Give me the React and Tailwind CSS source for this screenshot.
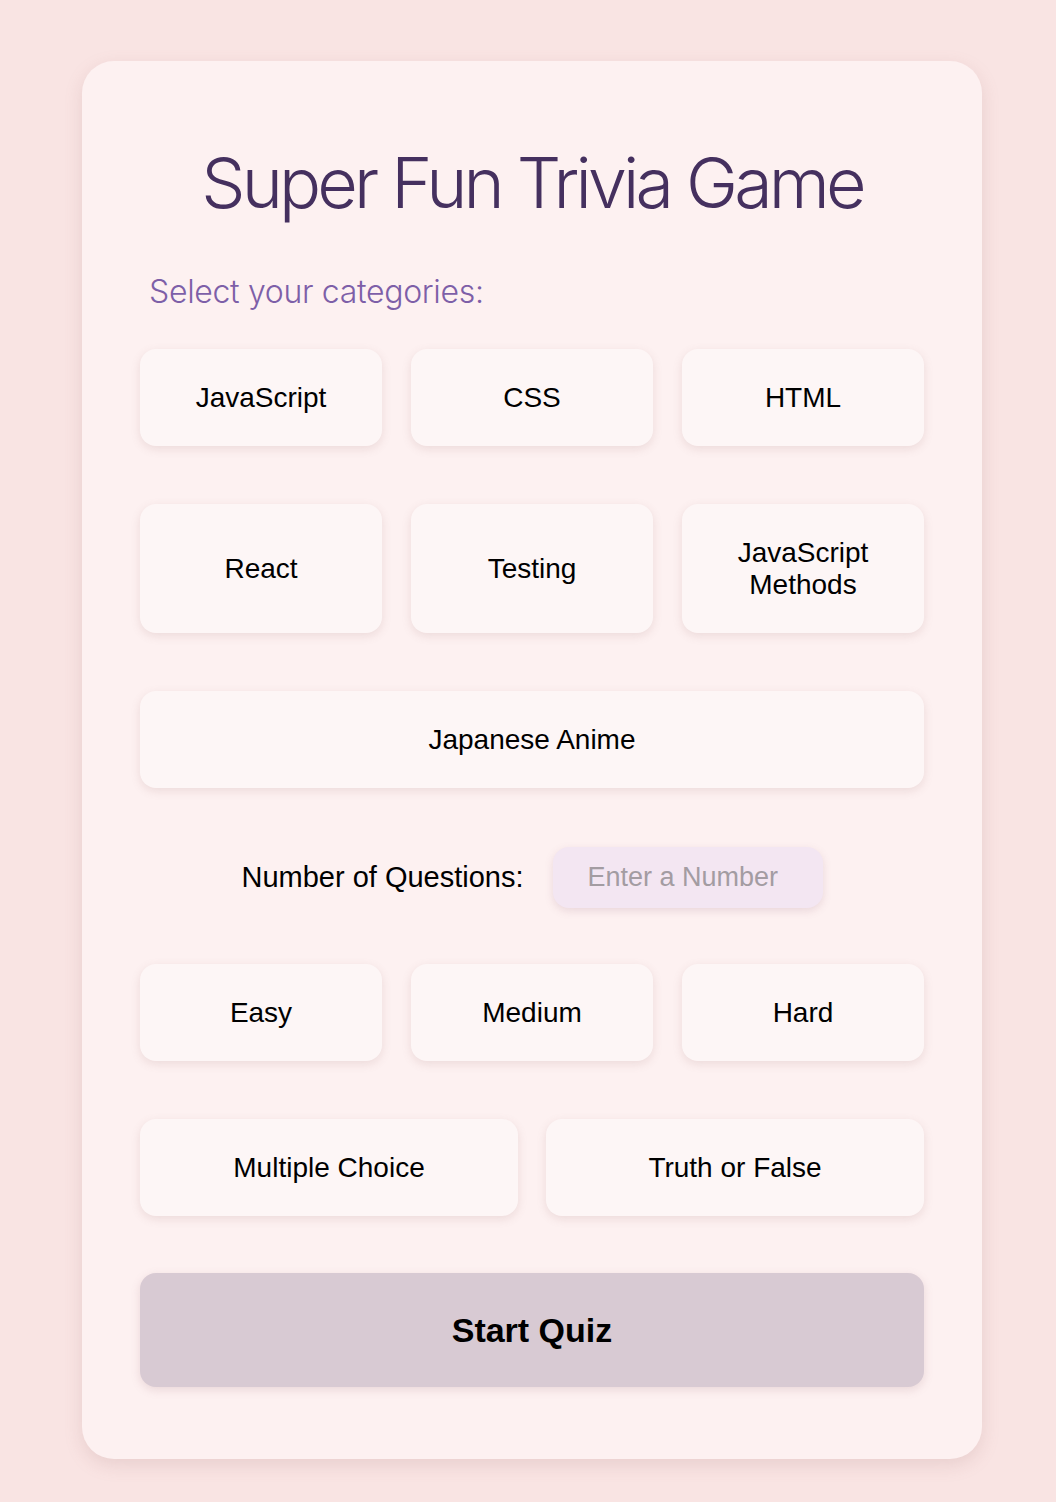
import { useState } from 'react';

const categories = ['JavaScript', 'CSS', 'HTML', 'React', 'Testing', 'JavaScript Methods'];
const difficulties = ['Easy', 'Medium', 'Hard'];
const types = ['Multiple Choice', 'Truth or False'];

function OptionButton({ label, className = '' }) {
  return (
    <button
      className={`rounded-2xl bg-[#fdf6f6] px-6 py-[32.5px] text-[28px] leading-[32px] text-black shadow-[0_3px_10px_rgba(150,100,100,0.16)] ${className}`}
      style={{ fontFamily: '"Liberation Sans", Arial, sans-serif' }}
    >
      {label}
    </button>
  );
}

export default function App() {
  const [count, setCount] = useState('');

  return (
    <div className="min-h-screen bg-[#f9e4e3] pt-[61px] pb-[43px]">
      <div className="ml-[82px] w-[900px] rounded-[32px] bg-[#fdf1f1] px-[58px] pt-[78px] pb-[72px] shadow-[0_6px_18px_rgba(160,110,110,0.18)]">
        <h1
          className="text-center text-[70px] font-light leading-[88px] tracking-[-0.055em] text-[#45305f]"
          style={{ fontFamily: 'Inter, sans-serif' }}
        >
          Super Fun Trivia Game
        </h1>

        <h2
          className="mt-[45px] pl-[9px] text-[32px] font-light leading-[40px] tracking-[-0.01em] text-[#7d5fa8]"
          style={{ fontFamily: 'Inter, sans-serif' }}
        >
          Select your categories:
        </h2>

        <div className="mt-[37px] grid grid-cols-3 gap-x-[29px] gap-y-[58px]">
          {categories.map((c) => (
            <OptionButton key={c} label={c} />
          ))}
          <OptionButton label="Japanese Anime" className="col-span-3" />
        </div>

        <div
          className="mt-[59px] flex items-center justify-center gap-[29px]"
          style={{ fontFamily: '"Liberation Sans", Arial, sans-serif' }}
        >
          <label className="text-[29px] text-black">Number of Questions:</label>
          <input
            type="text"
            inputMode="numeric"
            value={count}
            onChange={(e) => setCount(e.target.value)}
            placeholder="Enter a Number"
            className="h-[61px] w-[270px] rounded-2xl bg-[#f3e6f2] pl-[35px] pr-[20px] text-[27px] text-black placeholder:text-[#a39ca2] shadow-[0_3px_8px_rgba(150,100,120,0.18)] outline-none"
          />
        </div>

        <div className="mt-[56px] grid grid-cols-3 gap-x-[29px]">
          {difficulties.map((d) => (
            <OptionButton key={d} label={d} />
          ))}
        </div>

        <div className="mt-[58px] grid grid-cols-2 gap-x-[28px]">
          {types.map((t) => (
            <OptionButton key={t} label={t} />
          ))}
        </div>

        <button
          className="mt-[57px] w-full rounded-2xl bg-[#d8cad3] py-[37px] text-[34px] font-bold leading-[40px] text-black shadow-[0_3px_10px_rgba(150,100,110,0.18)]"
          style={{ fontFamily: '"Liberation Sans", Arial, sans-serif' }}
        >
          Start Quiz
        </button>
      </div>
    </div>
  );
}
